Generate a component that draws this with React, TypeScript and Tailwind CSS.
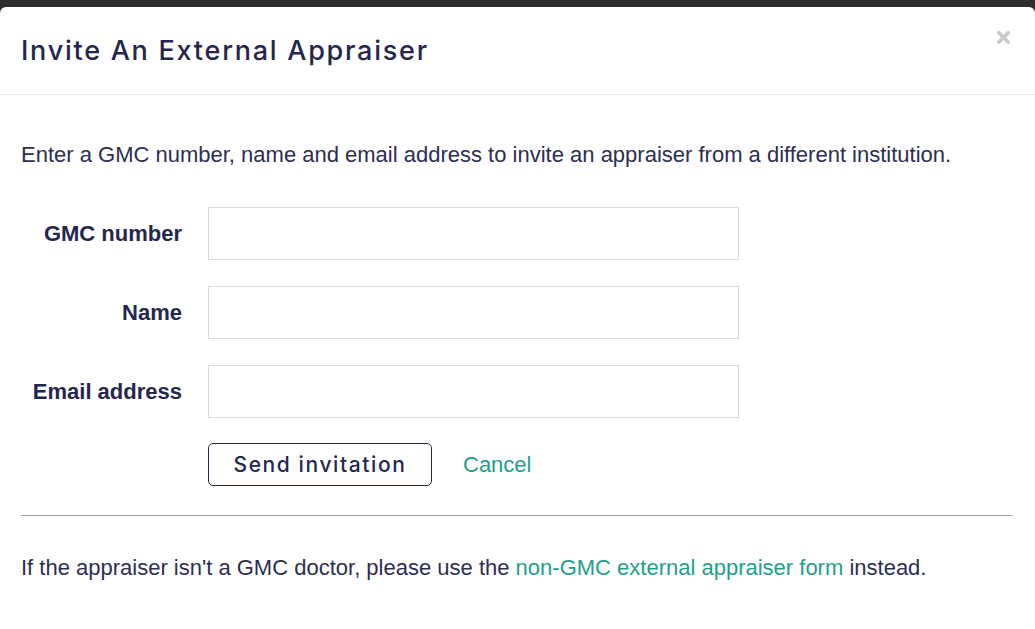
import { X } from "lucide-react";

const fields = [
  { id: "gmc", label: "GMC number" },
  { id: "name", label: "Name" },
  { id: "email", label: "Email address" },
];

export default function App() {
  return (
    <div className="h-[629px] w-[1035px] overflow-hidden bg-[#2e2e2e] pt-[7px]">
      <div className="flex h-full flex-col rounded-t-[6px] bg-white text-[#25274f]">
        <div className="relative flex h-[88px] items-center border-b border-[#ececec] px-[21px] pt-[1px]">
          <h1 className="font-['Inter',sans-serif] text-[27px] font-medium tracking-[1.75px] text-[#24264e]">
            Invite An External Appraiser
          </h1>
          <button type="button" className="absolute right-[22px] top-[21px] text-[#c8c8c8]">
            <X className="h-[19px] w-[19px]" strokeWidth={4.5} />
          </button>
        </div>
        <div className="px-[21px] font-['Liberation_Sans',Arial,sans-serif]">
          <p className="mt-[46px] text-[22px] leading-[28px] text-[#2c2e52]">
            Enter a GMC number, name and email address to invite an appraiser from a different institution.
          </p>
          <form className="mt-[38px] flex flex-col gap-[26px]">
            {fields.map((f) => (
              <div key={f.id} className="flex items-center">
                <label
                  htmlFor={f.id}
                  className="w-[161px] text-right text-[22px] font-bold text-[#24264e]"
                >
                  {f.label}
                </label>
                <input
                  id={f.id}
                  type="text"
                  className="ml-[26px] h-[53px] w-[531px] border border-[#dadada] bg-white px-3 text-[20px] outline-none"
                />
              </div>
            ))}
            <div className="ml-[187px] -mt-[1px] flex items-center gap-[31px]">
              <button
                type="button"
                className="h-[43px] w-[224px] rounded-[5px] border border-[#25274f] font-['Inter',sans-serif] text-[21px] font-medium tracking-[1.6px] text-[#25274f]"
              >
                Send invitation
              </button>
              <a href="#" className="text-[22px] text-[#21a08c]">
                Cancel
              </a>
            </div>
          </form>
          <hr className="mt-[29px] w-[992px] border-t border-[#a3a3a3]" />
          <p className="mt-[38px] text-[22px] leading-[28px] text-[#2c2e52]">
            If the appraiser isn't a GMC doctor, please use the{" "}
            <a href="#" className="text-[#21a08c]">
              non-GMC external appraiser form
            </a>{" "}
            instead.
          </p>
        </div>
      </div>
    </div>
  );
}
